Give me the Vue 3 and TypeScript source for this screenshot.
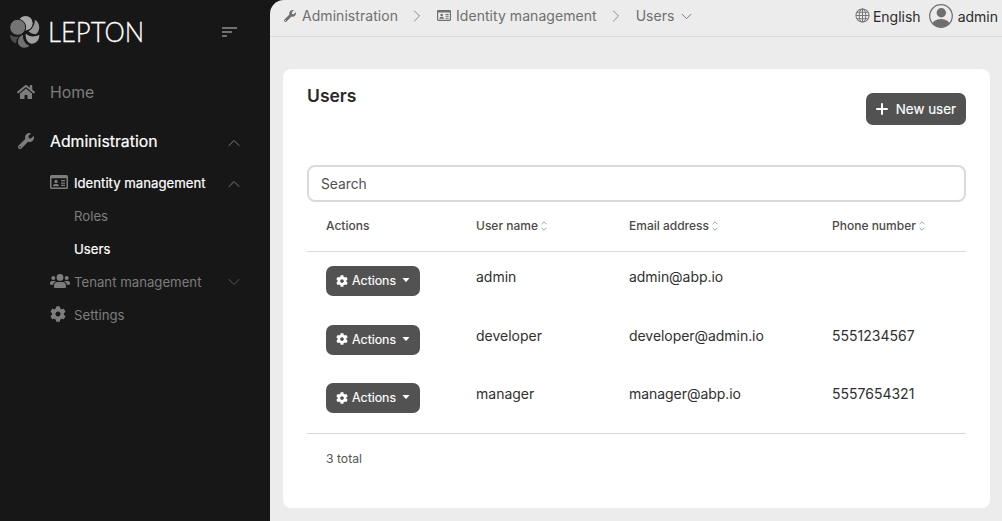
<script setup lang="ts">
import { h, type FunctionalComponent } from 'vue'

interface Glyph { box: string; d: string }

const glyphs: Record<string, Glyph> = {
  wrench: {
    box: '0 0 512 512',
    d: 'M507.73 109.1c-2.24-9.03-13.54-12.09-20.12-5.51l-74.36 74.36-67.88-11.31-11.31-67.88 74.36-74.36c6.62-6.62 3.43-17.9-5.66-20.16-47.38-11.74-99.55.91-136.58 37.93-39.64 39.64-50.55 97.1-34.05 147.2L18.74 402.76c-24.99 24.99-24.99 65.51 0 90.5 24.99 24.99 65.51 24.99 90.5 0l213.21-213.21c50.12 16.71 107.47 5.68 147.37-34.22 37.07-37.07 49.7-89.32 37.91-136.73zM64 472c-13.25 0-24-10.75-24-24 0-13.26 10.75-24 24-24s24 10.74 24 24c0 13.25-10.75 24-24 24z',
  },
  home: {
    box: '0 0 576 512',
    d: 'M280.37 148.26L96 300.11V464a16 16 0 0 0 16 16l112.06-.29a16 16 0 0 0 15.92-16V368a16 16 0 0 1 16-16h64a16 16 0 0 1 16 16v95.64a16 16 0 0 0 16 16.05L464 480a16 16 0 0 0 16-16V300L295.67 148.26a12.19 12.19 0 0 0-15.3 0zM571.6 251.47L488 182.56V44.05a12 12 0 0 0-12-12h-56a12 12 0 0 0-12 12v72.61L318.47 43a48 48 0 0 0-61 0L4.34 251.47a12 12 0 0 0-1.6 16.9l25.5 31A12 12 0 0 0 45.15 301l235.22-193.74a12.19 12.19 0 0 1 15.3 0L530.9 301a12 12 0 0 0 16.9-1.6l25.5-31a12 12 0 0 0-1.7-16.93z',
  },
  card: {
    box: '0 0 18 14',
    d: 'M1.5 0h15A1.5 1.5 0 0 1 18 1.5v11a1.5 1.5 0 0 1-1.5 1.5h-15A1.5 1.5 0 0 1 0 12.5v-11A1.5 1.5 0 0 1 1.5 0zM1.5 3.2v8.8a.5.5 0 0 0 .5.5h14a.5.5 0 0 0 .5-.5V3.2zM6 4.8a1.7 1.7 0 1 1 0 3.4 1.7 1.7 0 0 1 0-3.4zM3 11.2c0-1.5.9-2.2 2.2-2.2h1.6c1.3 0 2.2.7 2.2 2.2zM11 5h4v1.3h-4zM11 7.4h4v1.3h-4zM11 9.8h4v1.3h-4z',
  },
  people: {
    box: '0 0 20 14',
    d: 'M10 0a3.4 3.4 0 1 1 0 6.8A3.4 3.4 0 0 1 10 0zM7.7 8h4.6C14.6 8 16 9.5 16 11.7V13a1 1 0 0 1-1 1H5a1 1 0 0 1-1-1v-1.3C4 9.5 5.4 8 7.7 8zM3.3 2a2 2 0 1 1 0 4 2 2 0 0 1 0-4zM16.7 2a2 2 0 1 1 0 4 2 2 0 0 1 0-4zM2 7h2.7c.5 0 .9.2 1.2.5-1.5.6-2.5 1.7-2.8 3.2H.8a.8.8 0 0 1-.8-.8V9c0-1.1.9-2 2-2zM15.3 7H18a2 2 0 0 1 2 2v.9a.8.8 0 0 1-.8.8h-2.3c-.3-1.5-1.3-2.6-2.8-3.2.3-.3.7-.5 1.2-.5z',
  },
  cog: {
    box: '0 0 512 512',
    d: 'M487.4 315.7l-42.6-24.6c4.3-23.2 4.3-47 0-70.2l42.6-24.6c4.9-2.8 7.1-8.6 5.5-14-11.1-35.6-30-67.8-54.7-94.6-3.8-4.1-10-5.1-14.8-2.3L380.8 110c-17.9-15.4-38.5-27.3-60.8-35.1V25.8c0-5.6-3.9-10.5-9.4-11.7-36.7-8.2-74.3-7.8-109.2 0-5.5 1.2-9.4 6.1-9.4 11.7V75c-22.2 7.9-42.8 19.8-60.8 35.1L88.7 85.5c-4.9-2.8-11-1.9-14.8 2.3-24.7 26.7-43.6 58.9-54.7 94.6-1.7 5.4.6 11.2 5.5 14L67.3 221c-4.3 23.2-4.3 47 0 70.2l-42.6 24.6c-4.9 2.8-7.1 8.6-5.5 14 11.1 35.6 30 67.8 54.7 94.6 3.8 4.1 10 5.1 14.8 2.3l42.6-24.6c17.9 15.4 38.5 27.3 60.8 35.1v49.2c0 5.6 3.9 10.5 9.4 11.7 36.7 8.2 74.3 7.8 109.2 0 5.5-1.2 9.4-6.1 9.4-11.7v-49.2c22.2-7.9 42.8-19.8 60.8-35.1l42.6 24.6c4.9 2.8 11 1.9 14.8-2.3 24.7-26.7 43.6-58.9 54.7-94.6 1.5-5.5-.7-11.3-5.6-14.1zM256 336c-44.1 0-80-35.9-80-80s35.9-80 80-80 80 35.9 80 80-35.9 80-80 80z',
  },
}

const Icon: FunctionalComponent<{ name: string }> = (props) =>
  h('svg', { viewBox: glyphs[props.name].box, fill: 'currentColor', 'fill-rule': 'evenodd' }, [
    h('path', { d: glyphs[props.name].d }),
  ])
Icon.props = ['name']

const Chevron: FunctionalComponent = () =>
  h('svg', { viewBox: '0 0 12 8', fill: 'none', stroke: 'currentColor' }, [
    h('path', { d: 'M.7 1.2 6 6.5l5.3-5.3' }),
  ])

interface MenuItem {
  label: string
  level: number
  icon?: string
  active?: boolean
  state?: 'open' | 'closed'
}

const menu: MenuItem[] = [
  { label: 'Home', level: 1, icon: 'home' },
  { label: 'Administration', level: 1, icon: 'wrench', active: true, state: 'open' },
  { label: 'Identity management', level: 2, icon: 'card', active: true, state: 'open' },
  { label: 'Roles', level: 3 },
  { label: 'Users', level: 3, active: true },
  { label: 'Tenant management', level: 2, icon: 'people', state: 'closed' },
  { label: 'Settings', level: 2, icon: 'cog' },
]

const columns = [
  { label: 'Actions', sortable: false },
  { label: 'User name', sortable: true },
  { label: 'Email address', sortable: true },
  { label: 'Phone number', sortable: true },
]

const users = [
  { name: 'admin', email: 'admin@abp.io', phone: '' },
  { name: 'developer', email: 'developer@admin.io', phone: '5551234567' },
  { name: 'manager', email: 'manager@abp.io', phone: '5557654321' },
]
</script>

<template>
  <div class="app">
    <aside class="sidebar">
      <div class="brand">
        <svg class="mark" viewBox="0 0 30 32">
          <circle cx="15.500" cy="7.200" r="7.200" fill="#a9a9a9" />
          <path d="M24.800 3.800C30.500 6.500 30.500 15 26 18.200 23 18.200 20.500 17.200 18.500 15.200 22.500 13 24.800 9 24.800 3.800z" fill="#979797" />
          <path d="M15.800 17.500C19 20.800 24.500 21.500 29.300 18.800 29.500 24.500 25.500 28 21.500 27.700 17.500 27 15 22.500 15.800 17.500z" fill="#a0a0a0" />
          <path d="M13 18.800C12.800 24 15 28 19.500 29.800 16 33 9.500 32 8.200 27.500 7.200 23.500 9.500 20 13 18.800z" fill="#707070" />
          <path d="M.2 18.500C3 21 6.500 21.200 9.500 20.200 7 22 6 24.500 6.200 27.500 2.500 26.500 0 23 .2 18.500z" fill="#4c4c4c" />
          <circle cx="7.700" cy="11.300" r="8" fill="#747474" stroke="#171717" stroke-width="1" />
        </svg>
        <span class="wordmark">LEPTON</span>
        <span class="toggle"><i /><i /><i /></span>
      </div>
      <nav>
        <a v-for="item in menu" :key="item.label" class="item" :class="['level-' + item.level, { active: item.active }]">
          <span v-if="item.icon" class="slot"><Icon :name="item.icon" :class="'i-' + item.icon" /></span>
          <span class="label">{{ item.label }}</span>
          <Chevron v-if="item.state" class="chev" :class="item.state" />
        </a>
      </nav>
    </aside>

    <main class="main">
      <header class="topbar">
        <div class="crumbs">
          <Icon name="wrench" class="c-wrench" />
          <span>Administration</span>
          <Chevron class="sep" />
          <Icon name="card" class="c-card" />
          <span>Identity management</span>
          <Chevron class="sep" />
          <span>Users</span>
          <Chevron class="c-down" />
        </div>
        <div class="tools">
          <svg class="globe" viewBox="0 0 16 16" fill="none" stroke="#777" stroke-width="1.100">
            <circle cx="8" cy="8" r="7" />
            <ellipse cx="8" cy="8" rx="3.500" ry="7" />
            <path d="M8 1v14M1 8h14M2 4.600h12M2 11.400h12" />
          </svg>
          <span class="lang">English</span>
          <svg class="avatar" viewBox="0 0 24 24">
            <defs><clipPath id="face"><circle cx="12" cy="12" r="11" /></clipPath></defs>
            <g clip-path="url(#face)" fill="#6f6f6f">
              <circle cx="12.300" cy="8.800" r="4.700" />
              <ellipse cx="12" cy="22" rx="9.500" ry="7" />
            </g>
            <circle cx="12" cy="12" r="11.300" fill="none" stroke="#6f6f6f" stroke-width="1.200" />
          </svg>
          <span class="who">admin</span>
        </div>
      </header>

      <section class="panel">
        <div class="head">
          <h1>Users</h1>
          <button class="new">
            <svg class="plus" viewBox="0 0 12 12"><path d="M6 1v10M1 6h10" stroke="#fff" stroke-width="2" stroke-linecap="round" /></svg>
            <span>New user</span>
          </button>
        </div>
        <input class="search" type="text" placeholder="Search" />
        <div class="row thead">
          <span v-for="col in columns" :key="col.label" class="th">
            <span>{{ col.label }}</span>
            <svg v-if="col.sortable" class="sort" viewBox="0 0 6 10" fill="none" stroke="#999" stroke-width=".9">
              <path d="M.6 3.200 3 .8l2.400 2.400M.6 6.800 3 9.200l2.400-2.400" />
            </svg>
          </span>
        </div>
        <div class="tbody">
          <div v-for="user in users" :key="user.name" class="row">
            <span>
              <button class="act">
                <Icon name="cog" class="a-cog" />
                <span>Actions</span>
                <svg class="caret" viewBox="0 0 8 4"><path d="M.5 0h7L4.600 3.400a.8.8 0 0 1-1.200 0z" fill="#fff" /></svg>
              </button>
            </span>
            <span class="cell">{{ user.name }}</span>
            <span class="cell email">{{ user.email }}</span>
            <span class="cell">{{ user.phone }}</span>
          </div>
        </div>
        <div class="total">3 total</div>
      </section>
    </main>
  </div>
</template>

<style>
body { margin: 0; background: #171717; }
</style>

<style scoped>
* { box-sizing: border-box; }
.app { display: flex; width: 1002px; height: 521px; overflow: hidden; background: #171717; font-family: Inter, "Liberation Sans", sans-serif; font-size: 14px; }
svg { display: block; flex: none; }
span { white-space: nowrap; }
button { border: 0; font-family: inherit; color: #fff; background: #525252; display: flex; align-items: center; }

.sidebar { width: 270px; flex: none; color: #7d7d7d; }
.brand { height: 68px; padding: 16px 33px 0 10px; display: flex; align-items: flex-start; }
.mark { width: 30px; height: 32px; }
.wordmark { margin: -2px 0 0 8px; font-family: Lato, sans-serif; font-weight: 300; font-size: 28px; line-height: 34px; color: #fff; transform: scaleX(.915); transform-origin: 0 50%; -webkit-text-stroke: .3px #fff; }
.toggle { margin: 11px 0 0 auto; width: 15px; display: flex; flex-direction: column; gap: 2px; }
.toggle i { height: 2px; background: #707070; }
.toggle i:nth-child(2) { width: 10px; }
.toggle i:nth-child(3) { width: 5px; }
.item { display: flex; align-items: center; padding-right: 30px; height: 33px; font-size: 13.2px; }
.level-1 { height: 49px; padding-left: 17px; font-size: 15.8px; }
.level-1.active { height: 49px; }
.level-2 { padding-left: 50px; }
.level-3 { padding-left: 74px; }
.active .label { color: #fff; -webkit-text-stroke: .2px #fff; }
.slot { width: 24px; flex: none; }
.level-1 .slot { width: 33px; }
.i-home { width: 18px; height: 16px; margin-top: -1px; }
.i-wrench { width: 16px; height: 16px; margin: -1px 0 0 1px; }
.i-card { width: 18px; height: 14px; margin-top: -2px; }
.i-people { width: 20px; height: 14px; margin-top: -2px; }
.i-cog { width: 16px; height: 16px; margin-top: -2px; }
.chev { width: 12px; height: 8px; margin: 2px 0 0 auto; }
.chev.closed { opacity: .65; margin-top: 0; }
.open { transform: rotate(180deg); }

.main { flex: 1; height: 521px; background: #ececec; border-top-left-radius: 14px; }
.topbar { height: 37px; border-bottom: 1px solid #d7d7d7; display: flex; justify-content: space-between; padding: 0 4px 5px 14px; }
.crumbs, .tools { display: flex; align-items: center; }
.crumbs { color: #6f6f6f; letter-spacing: .05px; }
.c-wrench { width: 12px; height: 12px; margin-right: 6px; }
.sep { width: 12px; height: 8px; margin: 0 14px 0 13px; transform: rotate(-90deg); opacity: .8; }
.c-card { width: 14px; height: 11px; margin-right: 5px; }
.c-down { width: 11px; height: 7px; margin: 2px 0 0 6px; }
.tools { color: #2b2b2b; }
.lang, .who { padding-top: 1px; }
.globe { width: 15px; height: 15px; margin-right: 3px; }
.avatar { width: 24px; height: 24px; margin: 0 5px 0 8px; }

.panel { margin: 32px 12px 0 13px; height: 439px; background: #fff; border-radius: 8px; padding: 0 24px; }
.head { height: 96px; display: flex; justify-content: space-between; align-items: flex-start; }
h1 { margin: 15px 0 0; font-size: 17.5px; line-height: 24px; font-weight: 600; color: #292929; }
.new { margin-top: 24px; width: 100px; height: 32px; border-radius: 7px; padding: 0 10px 1px; font-size: 13.4px; justify-content: space-between; -webkit-text-stroke: .15px #fff; }
.plus { width: 12px; height: 12px; }
.search { display: block; width: 659px; height: 37px; border: 2px solid #dadada; border-radius: 8px; padding: 0 12px; font: 13.8px Inter, sans-serif; outline: 0; background: #fff; }
.search::placeholder { color: #505050; opacity: 1; }
.row { display: grid; grid-template-columns: 150px 153px 203px 1fr; padding-left: 19px; height: 58.5px; align-items: start; }
.thead { height: 50px; border-bottom: 1px solid #d9d9d9; color: #4b4b4b; font-size: 12px; font-weight: 500; align-items: center; padding-bottom: 2px; }
.th { display: flex; align-items: center; gap: 3px; }
.sort { width: 6px; height: 10px; }
.tbody { height: 182px; padding-top: 14px; border-bottom: 1px solid #d9d9d9; }
.act { width: 94px; height: 30px; border-radius: 7px; padding: 0 10px 1px; font-size: 12.4px; -webkit-text-stroke: .15px #fff; }
.a-cog { width: 12px; height: 12px; margin: 0 4px 0 0; }
.caret { width: 8px; height: 4px; margin: -1px 0 0 auto; }
.cell { color: #303030; line-height: 22px; }
.email { letter-spacing: -.05px; }
.total { padding-left: 19px; line-height: 50px; font-size: 12.2px; color: #555; }
</style>
